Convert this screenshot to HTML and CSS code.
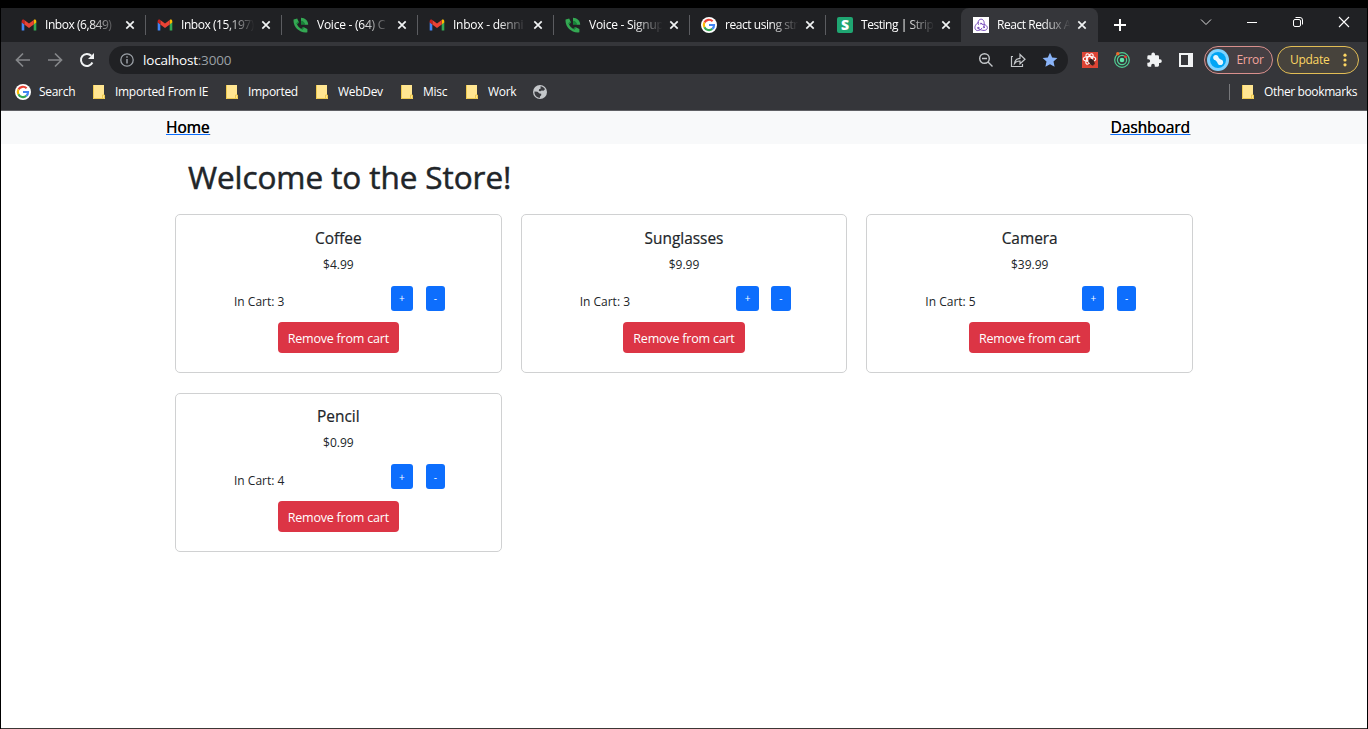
FILE: index.html
```html
<!DOCTYPE html>
<html lang="en">
<head>
<meta charset="utf-8">
<title>React Redux App</title>
<link rel="stylesheet" href="styles.css">
</head>
<body>
<svg class="defs" width="0" height="0">
  <symbol id="gmail" viewBox="0 0 16 16">
    <path fill="#4285f4" d="M.7 13.6h2.6V7.300L.7 5.300z"/>
    <path fill="#34a853" d="M12.700 13.600h2.600V5.300l-2.600 2z"/>
    <path fill="#fbbc04" d="M12.700 3.400v4l2.600-2V4.200c0-1.600-1.500-2.200-2.600-1.300z"/>
    <path fill="#ea4335" d="M3.300 7.400v-4.500L8 6.600l4.700-3.700v4.500L8 11z"/>
    <path fill="#c5221f" d="M.7 4.200v1.200l2.600 2V2.900C2.200 2.100.7 2.600.7 4.200z"/>
  </symbol>
  <symbol id="voice" viewBox="0 0 16 16">
    <path fill="#34a853" d="M.6 2.400 4.200 1.500l1.800 4-2 1.800c.9 1.900 2.400 3.600 4.300 4.600l1.900-2 4.200 2v3.300C7 16.600-.4 9.800.6 2.400z"/>
    <path fill="#188038" d="M4 7.300l2-1.800-.6-1.300L3 6.500zM8.300 11.900l1.900-2 1.300.6-2.200 2.500z"/>
    <path fill="#34a853" d="M8 .8c4 0 7.200 3.100 7.200 7h-3.600C11.600 6 10 4.300 8 4.300z"/>
    <path fill="#188038" d="M8 3.800c2.200 0 4.100 1.800 4.100 4H8z"/>
  </symbol>
  <symbol id="google" viewBox="0 0 16 16">
    <circle cx="8" cy="8" r="8" fill="#fff"/>
    <g fill="none" stroke-width="2.200">
      <path stroke="#ea4335" d="M3.400 5.600A5.100 5.100 0 0 1 11.600 4.300"/>
      <path stroke="#fbbc05" d="M3.400 10.200a5.100 5.100 0 0 1 0-4.600"/>
      <path stroke="#34a853" d="M11.300 11.900a5.100 5.100 0 0 1-7.900-1.700"/>
      <path stroke="#4285f4" d="M8 8h5c.1 1.700-.6 3-1.700 3.900"/>
    </g>
  </symbol>
  <symbol id="redux" viewBox="0 0 16 16">
    <path fill="#fff" d="M0 0h16v16H0z"/>
    <g fill="none" stroke="#764abc" stroke-width="1" stroke-linecap="round">
      <path d="M10.900 9.400C12 5.500 10.700 2.200 8.200 2.200S4.300 5 5.400 7.400"/>
      <path d="M5.400 5.500C2.600 6.800 1.200 10 2.300 12.200s5 1.700 6.500-.9"/>
      <path d="M4.700 11.200c3 2.300 7.700 3.100 9.200 1s-.9-5.200-4.600-4.900"/>
      <circle cx="5.300" cy="10.900" r=".6"/><circle cx="10.900" cy="10.200" r=".6"/><circle cx="8" cy="6.600" r=".6"/>
    </g>
  </symbol>
  <symbol id="close" viewBox="0 0 10 10">
    <path d="M1.300 1.300l7.400 7.400M8.700 1.300L1.300 8.700" stroke="#f1f3f4" stroke-width="1.700"/>
  </symbol>
  <symbol id="folder" viewBox="0 0 12 14">
    <path fill="#ffe591" d="M0 0h11v10h1v4H0z"/>
    <path fill="none" stroke="#edc94f" d="M.5 0v13.500h11V10M9.500 13.500V10h2"/>
  </symbol>
</svg>

<header class="browser">
  <div class="tabs">
    <div class="tab"><svg class="fav"><use href="#gmail"/></svg><span class="tab-title">Inbox (6,849)</span><svg class="x"><use href="#close"/></svg></div>
    <div class="tab"><svg class="fav"><use href="#gmail"/></svg><span class="tab-title">Inbox (15,197)</span><svg class="x"><use href="#close"/></svg></div>
    <div class="tab"><svg class="fav"><use href="#voice"/></svg><span class="tab-title loose">Voice - (64) C</span><svg class="x"><use href="#close"/></svg></div>
    <div class="tab"><svg class="fav"><use href="#gmail"/></svg><span class="tab-title loose">Inbox - denni</span><svg class="x"><use href="#close"/></svg></div>
    <div class="tab"><svg class="fav"><use href="#voice"/></svg><span class="tab-title loose">Voice - Signup</span><svg class="x"><use href="#close"/></svg></div>
    <div class="tab"><svg class="fav"><use href="#google"/></svg><span class="tab-title">react using str</span><svg class="x"><use href="#close"/></svg></div>
    <div class="tab last"><span class="fav stripe">S</span><span class="tab-title">Testing | Strip</span><svg class="x"><use href="#close"/></svg></div>
    <div class="tab active"><svg class="fav"><use href="#redux"/></svg><span class="tab-title">React Redux A</span><svg class="x"><use href="#close"/></svg></div>
    <div class="after-tabs"><svg class="plus" viewBox="0 0 12 12"><path d="M6 0v12M0 6h12" stroke="#fff" stroke-width="2"/></svg></div>
    <div class="controls">
      <svg viewBox="0 0 12 12"><path d="M1 3.500l5 5 5-5" fill="none" stroke="#ddd"/></svg>
      <svg viewBox="0 0 12 12"><path d="M1 6.500h10" stroke="#fff"/></svg>
      <svg viewBox="0 0 12 12"><g fill="none" stroke="#fff"><rect x="1.500" y="3.500" width="7" height="7" rx="1.500"/><path d="M3.500 1.500h4.500a2.500 2.500 0 0 1 2.500 2.500v4.500"/></g></svg>
      <svg viewBox="0 0 12 12"><path d="M1 1l10 10M11 1L1 11" stroke="#fff" stroke-width="1.100"/></svg>
    </div>
  </div>

  <div class="toolbar">
    <div class="nav-icons">
      <svg viewBox="0 0 16 16"><path d="M15 8H2M8 1.500L1.500 8 8 14.500" fill="none" stroke="#85878a" stroke-width="1.700"/></svg>
      <svg viewBox="0 0 16 16"><path d="M1 8h13M8 1.500L14.500 8 8 14.500" fill="none" stroke="#85878a" stroke-width="1.700"/></svg>
      <svg viewBox="0 0 16 16"><path d="M13.400 10.500A6 6 0 1 1 12.300 3.800" fill="none" stroke="#f1f3f4" stroke-width="2"/><path d="M15 1v6H9z" fill="#f1f3f4"/></svg>
    </div>
    <div class="omnibox">
      <svg class="info" viewBox="0 0 14 14"><circle cx="7" cy="7" r="6.200" fill="none" stroke="#9aa0a6" stroke-width="1.300"/><path d="M7 6v4.500M7 3.300v1.500" stroke="#9aa0a6" stroke-width="1.500"/></svg>
      <span class="url">localhost<span class="port">:3000</span></span>
      <div class="box-icons">
        <svg viewBox="0 0 16 16"><g fill="none" stroke="#c4c7ca" stroke-width="1.400"><circle cx="6.500" cy="6.500" r="4.800"/><path d="M4 6.500h5M10 10l4.500 4.500"/></g></svg>
        <svg viewBox="0 0 16 16"><g fill="none" stroke="#c4c7ca" stroke-width="1.200"><path d="M3 4.500H1.500v10h11V12"/><path d="M4.500 11.500c.5-3.500 2.500-5 5.500-5.200V2.500l5 4.700-5 4.600V9c-2.500 0-4 .7-5.500 2.500z"/></g></svg>
        <svg viewBox="0 0 16 16"><path fill="#8ab4f8" d="M8 .7l2.200 4.800 5.200.6-3.900 3.500 1.100 5.200L8 12.200l-4.600 2.600 1.100-5.200L.6 6.100l5.200-.6z"/></svg>
      </div>
    </div>
    <div class="exts">
      <svg viewBox="0 0 16 16"><path fill="#dc4434" d="M0 0h16v16H0z"/><g fill="none" stroke="#fff" stroke-width="1.100"><ellipse cx="7.500" cy="7" rx="6.300" ry="2.500"/><ellipse cx="7.500" cy="7" rx="5.800" ry="2.300" transform="rotate(60 7.500 7)"/><ellipse cx="7.500" cy="7" rx="5.800" ry="2.300" transform="rotate(-60 7.500 7)"/></g><ellipse cx="9.700" cy="10" rx="2.400" ry="3.400" fill="#39231f" transform="rotate(-35 9.700 10)"/><path d="M6 9l7 3M7 13.500l5-6M9 7l2 7" stroke="#39231f" stroke-width=".7"/></svg>
      <svg viewBox="0 0 16 16"><g fill="none" stroke="#51cf94" stroke-width="1.200"><circle cx="8" cy="8" r="7.300"/><circle cx="8" cy="8" r="4.600"/></g><circle cx="8" cy="8" r="2.300" fill="#62e6aa"/><circle cx="3.800" cy="1.800" r="1.700" fill="#f26b2b"/><circle cx="11.500" cy="4.800" r="1.400" fill="#ee3e35"/></svg>
      <svg viewBox="0 0 24 24"><path fill="#f1f3f4" d="M21 11h-1.500V7a2 2 0 0 0-2-2h-4V3.500a2.700 2.700 0 0 0-5.400 0V5H4a2 2 0 0 0-2 2v3.800h1.500a2.700 2.700 0 0 1 0 5.400H2V20a2 2 0 0 0 2 2h3.800v-1.500a2.700 2.700 0 0 1 5.400 0V22h4.300a2 2 0 0 0 2-2v-3.600H21a2.700 2.700 0 0 0 0-5.400z"/></svg>
      <svg viewBox="0 0 16 16"><path fill="#f1f3f4" fill-rule="evenodd" d="M1 1h14v14H1zM3 3v10h7V3z"/></svg>
    </div>
    <div class="pill error"><svg class="avatar" viewBox="0 0 22 22"><circle cx="11" cy="11" r="11" fill="#7fd3ff"/><circle cx="11" cy="11" r="8" fill="#00a5f5"/><path d="M8.500 8.500l5 5" stroke="#e4f6ff" stroke-width="4"/><circle cx="8.800" cy="8.500" r="2.600" fill="#e4f6ff"/><circle cx="13.300" cy="13.300" r="2.800" fill="#e4f6ff"/></svg><span>Error</span></div>
    <div class="pill update"><span>Update</span><svg class="dots" viewBox="0 0 4 14" fill="#fdd663"><circle cx="2" cy="2.200" r="1.600"/><circle cx="2" cy="7" r="1.600"/><circle cx="2" cy="11.800" r="1.600"/></svg></div>
  </div>

  <div class="bookmarks">
    <div class="bm w-search"><svg class="fav"><use href="#google"/></svg><span>Search</span></div>
    <div class="bm w-ie"><svg class="folder"><use href="#folder"/></svg><span>Imported From IE</span></div>
    <div class="bm w-imp"><svg class="folder"><use href="#folder"/></svg><span>Imported</span></div>
    <div class="bm w-web"><svg class="folder"><use href="#folder"/></svg><span>WebDev</span></div>
    <div class="bm w-misc"><svg class="folder"><use href="#folder"/></svg><span>Misc</span></div>
    <div class="bm w-work"><svg class="folder"><use href="#folder"/></svg><span>Work</span></div>
    <svg class="globe" viewBox="0 0 14 14"><circle cx="7" cy="7" r="7" fill="#c4c7ca"/><path fill="#3b3c40" d="M1.500 6.500l3 .2 2 1.800 1.700.3v1.400L7 11.500v1.300C3.700 12.800 1 10 1.500 6.500zM7.500 1.300c2 .2 3.600 1.300 4.500 3l-1.500 1.400-1.800-.2-1.200.8-1.700-.3.300-1.700 1.600-.7z"/></svg>
    <div class="other"><svg class="folder"><use href="#folder"/></svg><span>Other bookmarks</span></div>
  </div>
</header>

<main class="page">
  <nav class="navbar"><a href="#">Home</a><a href="#" class="dash">Dashboard</a></nav>
  <h1>Welcome to the Store!</h1>
  <section class="cards">
    <article class="card"><h2>Coffee</h2><p class="price">$4.99</p>
      <div class="qty"><span class="count">In Cart: 3</span><button class="plus-btn">+</button><button class="minus-btn">-</button></div>
      <button class="remove"><span>Remove from cart</span></button></article>
    <article class="card"><h2>Sunglasses</h2><p class="price">$9.99</p>
      <div class="qty"><span class="count">In Cart: 3</span><button class="plus-btn">+</button><button class="minus-btn">-</button></div>
      <button class="remove"><span>Remove from cart</span></button></article>
    <article class="card"><h2>Camera</h2><p class="price">$39.99</p>
      <div class="qty"><span class="count">In Cart: 5</span><button class="plus-btn">+</button><button class="minus-btn">-</button></div>
      <button class="remove"><span>Remove from cart</span></button></article>
    <article class="card"><h2>Pencil</h2><p class="price">$0.99</p>
      <div class="qty"><span class="count">In Cart: 4</span><button class="plus-btn">+</button><button class="minus-btn">-</button></div>
      <button class="remove"><span>Remove from cart</span></button></article>
  </section>
</main>
</body>
</html>
```
FILE: styles.css
```css
* { box-sizing: border-box; }

body {
  margin: 0;
  height: 729px;
  padding: 8px 1px 0;
  background: #000;
  font-family: "Open Sans", "Noto Sans", sans-serif;
  color: #212529;
  display: flex;
  flex-direction: column;
  overflow: hidden;
}

svg { display: block; flex: none; }
.defs { position: absolute; }

/* Browser frame */
.browser {
  height: 103px;
  flex: none;
  background: #35363a;
  border-bottom: 1px solid #5f6064;
  font-size: 12px;
  letter-spacing: -0.3px;
  color: #fff;
  white-space: nowrap;
}

.tabs { height: 34px; display: flex; background: #202124; padding-left: 9px; }
.tab {
  width: 136px;
  flex: none;
  display: flex;
  align-items: center;
  padding: 0 10px 0 11px;
  background: linear-gradient(#5b5c60, #5b5c60) right 7px / 1px 20px no-repeat;
}
.tab.last { background: #202124; }
.tab.active {
  width: 137px;
  margin-left: -1px;
  padding: 0 10px 0 12px;
  background: #35363a;
  border-radius: 8px 8px 0 0;
}
.tab-title {
  width: 75px;
  margin: 0 5px 2px 8px;
  overflow: hidden;
  letter-spacing: -0.45px;
  mask-image: linear-gradient(90deg, #000 60%, transparent 98%);
}
.tab-title.loose { letter-spacing: -0.25px; }
.fav { width: 16px; height: 16px; flex: none; }
.stripe {
  background: #1fa672;
  border-radius: 2px;
  font-size: 14px;
  font-weight: 800;
  line-height: 16px;
  text-align: center;
}
.x { width: 10px; height: 10px; }
.after-tabs { width: 85px; display: flex; align-items: center; padding-left: 16px; }
.plus { width: 12px; height: 12px; }
.controls { display: flex; padding-top: 8px; }
.controls svg { width: 12px; height: 12px; margin: 0 17px; }

.toolbar { height: 36px; display: flex; align-items: center; padding-left: 14px; }
.nav-icons { display: flex; gap: 16px; margin-right: 14px; }
.nav-icons svg { width: 16px; height: 16px; }
.omnibox {
  width: 959px;
  height: 28px;
  flex: none;
  display: flex;
  align-items: center;
  padding: 0 10px 0 11px;
  border-radius: 14px;
  background: #202124;
}
.info { width: 14px; height: 14px; margin-right: 9px; }
.url { font-size: 13.5px; letter-spacing: -0.2px; padding-bottom: 1px; }
.port { color: #9aa0a6; }
.box-icons { display: flex; gap: 16px; margin-left: auto; }
.box-icons svg { width: 16px; height: 16px; }
.exts { display: flex; gap: 16px; margin: 0 10px 0 14px; }
.exts svg { width: 16px; height: 16px; }
.pill {
  height: 28px;
  display: flex;
  align-items: center;
  border: 1px solid;
  border-radius: 14px;
  flex: none;
}
.pill span { padding-bottom: 1px; }
.error { width: 69px; margin-right: 4px; padding-left: 2px; color: #f2a49e; background: #453f43; gap: 7.5px; border-color: #d9908d; }
.update { width: 82px; padding-left: 12px; color: #fdd663; background: #47433c; border-color: #e2bd55; }
.avatar { width: 22px; height: 22px; }
.dots { width: 4px; height: 14px; margin-left: auto; margin-right: 11px; }

.bookmarks { height: 32px; display: flex; align-items: center; padding: 0 10px 4px 14px; }
.bm, .other { display: flex; align-items: center; flex: none; }
.bm span, .other span { padding-bottom: 1px; }
.bm .fav { margin-right: 8px; }
.folder { width: 12px; height: 14px; margin-right: 10px; }
.w-search { width: 78px; }
.w-ie { width: 133px; }
.w-imp { width: 90px; }
.w-web { width: 85px; }
.w-misc { width: 65px; }
.w-work { width: 67px; }
.globe { width: 14px; height: 14px; }
.other { margin-left: auto; padding-left: 12px; border-left: 1px solid #77787b; height: 16px; letter-spacing: -0.37px; }

/* Store page */
.page { flex: 1; background: #fff; border-bottom: 1px solid #3c3735; }
.navbar {
  height: 33px;
  display: flex;
  justify-content: space-between;
  padding: 5px 177px 0 165px;
  background: #f8f9fa;
  font-size: 15.4px;
  line-height: 24px;
}
.navbar a {
  color: #000;
  text-shadow: 0.3px 0 0 #000;
  text-decoration: underline 1px #0d6efd;
  text-underline-offset: 1px;
  text-decoration-skip-ink: none;
}
h1 {
  margin: 0;
  padding: 13px 0 0 187px;
  height: 70px;
  font-size: 31.5px;
  font-weight: 400;
  letter-spacing: -0.08px;
  line-height: 40px;
  -webkit-text-stroke: 0.5px currentColor;
}
.cards {
  display: grid;
  grid-template-columns: repeat(3, minmax(0, 1fr));
  gap: 19.6px 19px;
  padding: 0 174px;
}
.card {
  height: 159px;
  border: 1px solid #d0d1d2;
  border-radius: 5px;
  padding-top: 13.8px;
  display: flex;
  flex-direction: column;
}
h2 { margin: 0; font-size: 15.4px; font-weight: 400; line-height: 20px; text-align: center; -webkit-text-stroke: 0.2px currentColor; }
.price { margin: 6px 0 0; font-size: 12px; line-height: 20px; text-align: center; }
.qty { display: flex; height: 25px; margin: 11px 0 0 58px; font-size: 12px; flex: none; }
.count { width: 156.8px; padding-top: 6.3px; line-height: 20px; }
button {
  border: 0;
  padding: 0;
  color: #fff;
  background: #0d6efd;
  border-radius: 3px;
  font-family: inherit;
  font-size: 10px;
}
.plus-btn { width: 22.300px; margin-right: 12.500px; }
.minus-btn { width: 19.300px; }
.remove {
  width: 121.5px;
  height: 31px;
  flex: none;
  margin: 11.2px auto 0;
  padding-top: 2px;
  background: #dc3545;
  border-radius: 4px;
  font-size: 12.5px;
  letter-spacing: -0.2px;
}
```
